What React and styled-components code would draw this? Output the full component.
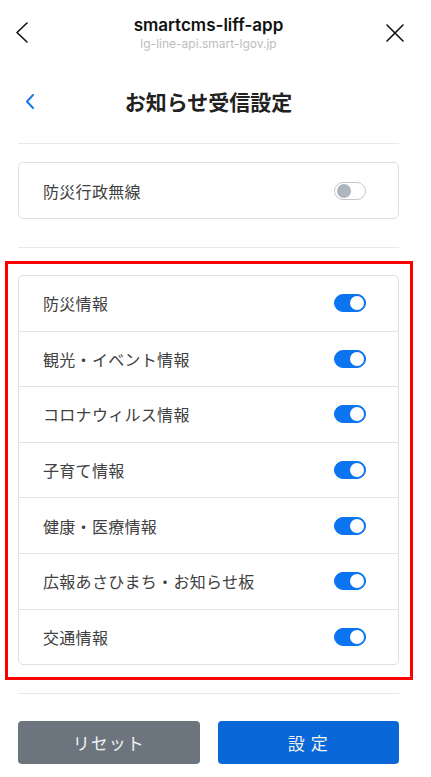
import React, { useState } from "react";
import styled, { createGlobalStyle } from "styled-components";

const Global = createGlobalStyle`
  html, body { margin: 0; padding: 0; background: #fff; }
  body { font-family: "Noto Sans CJK JP", "Noto Sans", sans-serif; color: #333; }
  * { box-sizing: border-box; }
`;

const Page = styled.div`
  width: 417px;
  background: #fff;
`;

const TopBar = styled.div`
  display: grid;
  grid-template-columns: 44px 1fr 44px;
  align-items: center;
  height: 62px;
`;

const IconCell = styled.div`
  display: flex;
  justify-content: center;
  align-items: center;
  padding-top: ${(p) => p.$pt || 0}px;
`;

const TitleBox = styled.div`
  display: flex;
  flex-direction: column;
  align-items: center;
  padding-top: 4px;
`;

const AppTitle = styled.div`
  font-family: Inter, "Liberation Sans", sans-serif;
  font-weight: 600;
  font-size: 17px;
  line-height: 22px;
  color: #111;
`;

const AppUrl = styled.div`
  font-family: Inter, "Liberation Sans", sans-serif;
  font-size: 12px;
  line-height: 16px;
  color: #bdbdbd;
`;

const Content = styled.div`
  margin-left: 18px;
  width: 381px;
`;

const PageHeader = styled.div`
  display: grid;
  grid-template-columns: 24px 1fr 24px;
  align-items: center;
  height: 44px;
  margin-top: 17px;
  margin-bottom: 20px;
`;

const PageTitle = styled.h1`
  margin: 0;
  text-align: center;
  font-size: 21px;
  font-weight: 700;
  color: #222;
  line-height: 44px;
`;

const Divider = styled.div`
  height: 1px;
  background: #e8e8e8;
  margin-top: ${(p) => p.$mt || 0}px;
`;

const Card = styled.div`
  border: 1px solid #dfdfdf;
  border-radius: 5px;
  background: #fff;
  margin-top: ${(p) => p.$mt || 0}px;
`;

const Row = styled.div`
  box-sizing: content-box;
  display: flex;
  align-items: center;
  justify-content: space-between;
  height: ${(p) => p.$h || 54.6}px;
  padding: 0 32px 0 24px;
  & + & {
    border-top: 1px solid #e3e3e3;
  }
`;

const Label = styled.span`
  font-size: 16px;
  color: #404040;
  letter-spacing: 0.3px;
`;

const Highlight = styled.div`
  border: 3px solid #ff0000;
  margin: 13px -14px 0 -13px;
  padding: 11px 11px 12px 10px;
`;

const Switch = styled.button`
  position: relative;
  width: 32px;
  height: 18px;
  border-radius: 9px;
  padding: 0;
  cursor: pointer;
  border: 1px solid ${(p) => (p.$on ? "#0b74f0" : "#c5c8cc")};
  background: ${(p) => (p.$on ? "#0b74f0" : "#fff")};
  &::after {
    content: "";
    position: absolute;
    top: 1px;
    left: ${(p) => (p.$on ? "15px" : "2px")};
    width: 14px;
    height: 14px;
    border-radius: 50%;
    background: ${(p) => (p.$on ? "#fff" : "#adb5bd")};
  }
`;

const Buttons = styled.div`
  display: grid;
  grid-template-columns: 1fr 1fr;
  gap: 18px;
  margin-top: 27px;
`;

const Btn = styled.button`
  height: 43px;
  border: none;
  border-radius: 4px;
  font-family: "Noto Sans CJK JP", sans-serif;
  font-size: 17px;
  letter-spacing: 1px;
  color: #f2f2f2;
  background: ${(p) => (p.$primary ? "#0a67d8" : "#6c757d")};
`;

const Chevron = ({ color = "#111", w = 12, h = 21, sw = 1.6 }) => (
  <svg width={w} height={h} viewBox={`0 0 ${w} ${h}`}>
    <polyline
      points={`${w - 1},1 1,${h / 2} ${w - 1},${h - 1}`}
      fill="none"
      stroke={color}
      strokeWidth={sw}
      strokeLinecap="round"
      strokeLinejoin="round"
    />
  </svg>
);

const Close = () => (
  <svg width="18" height="18" viewBox="0 0 18 18">
    <path d="M1 1 L17 17 M17 1 L1 17" stroke="#111" strokeWidth="1.6" strokeLinecap="round" />
  </svg>
);

const items = [
  "防災情報",
  "観光・イベント情報",
  "コロナウィルス情報",
  "子育て情報",
  "健康・医療情報",
  "広報あさひまち・お知らせ板",
  "交通情報",
];

export default function App() {
  const [radio, setRadio] = useState(false);
  const [on, setOn] = useState(items.map(() => true));
  return (
    <Page>
      <Global />
      <TopBar>
        <IconCell $pt={2}>
          <Chevron />
        </IconCell>
        <TitleBox>
          <AppTitle>smartcms-liff-app</AppTitle>
          <AppUrl>lg-line-api.smart-lgov.jp</AppUrl>
        </TitleBox>
        <IconCell $pt={3}>
          <Close />
        </IconCell>
      </TopBar>
      <Content>
        <PageHeader>
          <IconCell>
            <Chevron color="#1a7ae8" w={8} h={15} sw={2} />
          </IconCell>
          <PageTitle>お知らせ受信設定</PageTitle>
          <span />
        </PageHeader>
        <Divider />
        <Card $mt={18}>
          <Row $h={55}>
            <Label>防災行政無線</Label>
            <Switch $on={radio} onClick={() => setRadio(!radio)} />
          </Row>
        </Card>
        <Divider $mt={28} />
        <Highlight>
          <Card>
            {items.map((t, i) => (
              <Row key={t}>
                <Label>{t}</Label>
                <Switch
                  $on={on[i]}
                  onClick={() => setOn(on.map((v, j) => (j === i ? !v : v)))}
                />
              </Row>
            ))}
          </Card>
        </Highlight>
        <Divider $mt={13} />
        <Buttons>
          <Btn>リセット</Btn>
          <Btn $primary>設 定</Btn>
        </Buttons>
      </Content>
    </Page>
  );
}
